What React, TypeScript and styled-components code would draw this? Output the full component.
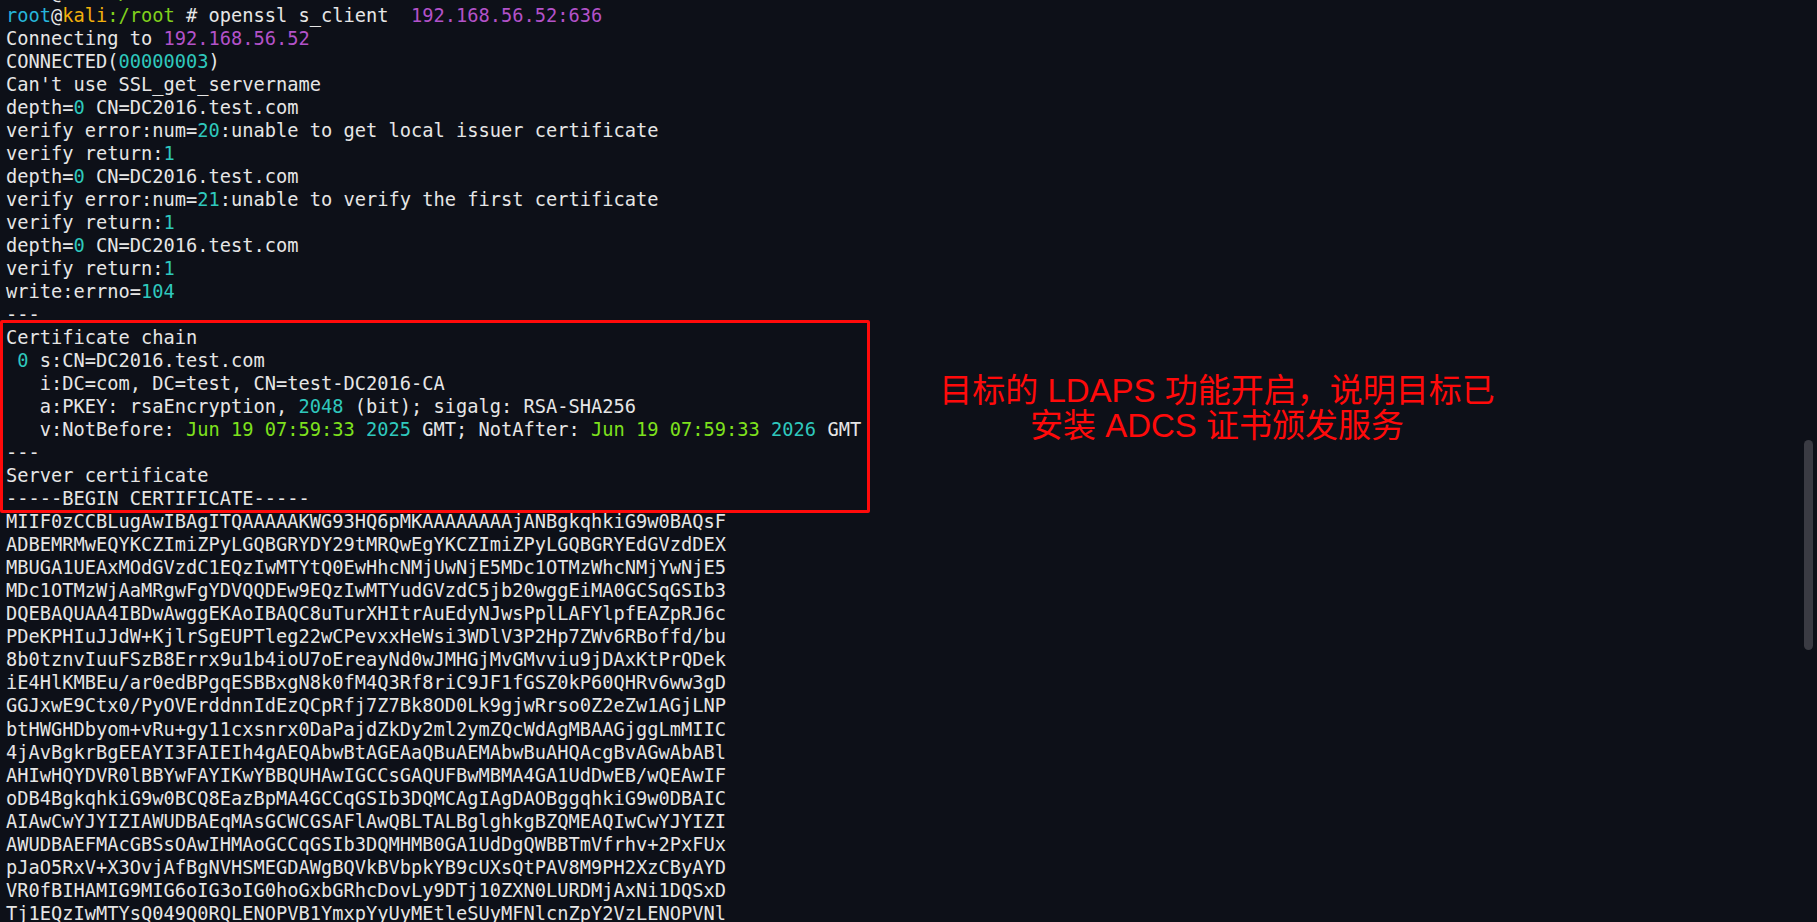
import React from 'react';
import styled, { createGlobalStyle } from 'styled-components';

const Colors = {
  bg: '#0d1018',
  text: '#e6e6e6',
  num: '#2fc8bd',
  addr: '#b352c9',
  date: '#7ee11d',
  user: '#26b5da',
  host: '#f3b10c',
  path: '#80d11d',
  mark: '#ff0a0a',
  thumb: '#3a3b43',
};

type Tone = 'text' | 'num' | 'addr' | 'date' | 'user' | 'host' | 'path';
type Segment = [string, Tone?];

const GlobalStyle = createGlobalStyle`
  html, body {
    margin: 0;
    padding: 0;
    background: ${Colors.bg};
    overflow: hidden;
  }
`;

const Screen = styled.div`
  width: 1817px;
  height: 922px;
  display: flex;
  flex-direction: row;
  background: ${Colors.bg};
  overflow: hidden;
`;

const Terminal = styled.div`
  flex: 1;
  margin-top: -19px;
  font-family: 'DejaVu Sans Mono', 'Liberation Mono', monospace;
  font-size: 18.69px;
  line-height: 23.03px;
  color: ${Colors.text};
`;

const Line = styled.div<{ $inset?: number }>`
  padding-left: ${(p) => p.$inset ?? 6}px;
  white-space: pre;
  height: 23.03px;
`;

const Span = styled.span<{ $tone: Tone }>`
  color: ${(p) => Colors[p.$tone]};
`;

const ChainRow = styled.div`
  display: flex;
  flex-direction: row;
  align-items: flex-start;
  margin: -6.4px 0 -3px 0;
`;

const ChainBox = styled.div`
  width: 864px;
  flex-shrink: 0;
  border: 3px solid ${Colors.mark};
  border-radius: 2px;
  padding-top: 3.4px;
`;

const Note = styled.p`
  margin: 0 0 0 47px;
  padding-top: 53px;
  width: 600px;
  font-family: 'Liberation Sans', 'Noto Sans CJK SC', sans-serif;
  font-size: 33px;
  line-height: 35px;
  color: ${Colors.mark};
  text-align: center;
  white-space: nowrap;
`;

const ScrollTrack = styled.div`
  width: 17px;
  flex-shrink: 0;
  padding-top: 440px;
  display: flex;
  justify-content: center;
`;

const Thumb = styled.div`
  width: 9px;
  height: 210px;
  border-radius: 5px;
  background: ${Colors.thumb};
`;

const prompt: Segment[] = [
  ['root', 'user'],
  ['@'],
  ['kali', 'host'],
  [':/root', 'path'],
  [' # '],
];

const before: Segment[][] = [
  prompt,
  [...prompt, ['openssl s_client  '], ['192.168.56.52:636', 'addr']],
  [['Connecting to '], ['192.168.56.52', 'addr']],
  [['CONNECTED('], ['00000003', 'num'], [')']],
  [["Can't use SSL_get_servername"]],
  [['depth='], ['0', 'num'], [' CN=DC2016.test.com']],
  [['verify error:num='], ['20', 'num'], [':unable to get local issuer certificate']],
  [['verify return:'], ['1', 'num']],
  [['depth='], ['0', 'num'], [' CN=DC2016.test.com']],
  [['verify error:num='], ['21', 'num'], [':unable to verify the first certificate']],
  [['verify return:'], ['1', 'num']],
  [['depth='], ['0', 'num'], [' CN=DC2016.test.com']],
  [['verify return:'], ['1', 'num']],
  [['write:errno='], ['104', 'num']],
  [['---']],
];

const chain: Segment[][] = [
  [['Certificate chain']],
  [[' '], ['0', 'num'], [' s:CN=DC2016.test.com']],
  [['   i:DC=com, DC=test, CN=test-DC2016-CA']],
  [['   a:PKEY: rsaEncryption, '], ['2048', 'num'], [' (bit); sigalg: RSA-SHA256']],
  [
    ['   v:NotBefore: '],
    ['Jun 19 07:59:33', 'date'],
    [' '],
    ['2025', 'num'],
    [' GMT; NotAfter: '],
    ['Jun 19 07:59:33', 'date'],
    [' '],
    ['2026', 'num'],
    [' GMT'],
  ],
  [['---']],
  [['Server certificate']],
  [['-----BEGIN CERTIFICATE-----']],
];

const certBody = [
  'MIIF0zCCBLugAwIBAgITQAAAAAKWG93HQ6pMKAAAAAAAAjANBgkqhkiG9w0BAQsF',
  'ADBEMRMwEQYKCZImiZPyLGQBGRYDY29tMRQwEgYKCZImiZPyLGQBGRYEdGVzdDEX',
  'MBUGA1UEAxMOdGVzdC1EQzIwMTYtQ0EwHhcNMjUwNjE5MDc1OTMzWhcNMjYwNjE5',
  'MDc1OTMzWjAaMRgwFgYDVQQDEw9EQzIwMTYudGVzdC5jb20wggEiMA0GCSqGSIb3',
  'DQEBAQUAA4IBDwAwggEKAoIBAQC8uTurXHItrAuEdyNJwsPplLAFYlpfEAZpRJ6c',
  'PDeKPHIuJJdW+KjlrSgEUPTleg22wCPevxxHeWsi3WDlV3P2Hp7ZWv6RBoffd/bu',
  '8b0tznvIuuFSzB8Errx9u1b4ioU7oEreayNd0wJMHGjMvGMvviu9jDAxKtPrQDek',
  'iE4HlKMBEu/ar0edBPgqESBBxgN8k0fM4Q3Rf8riC9JF1fGSZ0kP60QHRv6ww3gD',
  'GGJxwE9Ctx0/PyOVErddnnIdEzQCpRfj7Z7Bk8OD0Lk9gjwRrso0Z2eZw1AGjLNP',
  'btHWGHDbyom+vRu+gy11cxsnrx0DaPajdZkDy2ml2ymZQcWdAgMBAAGjggLmMIIC',
  '4jAvBgkrBgEEAYI3FAIEIh4gAEQAbwBtAGEAaQBuAEMAbwBuAHQAcgBvAGwAbABl',
  'AHIwHQYDVR0lBBYwFAYIKwYBBQUHAwIGCCsGAQUFBwMBMA4GA1UdDwEB/wQEAwIF',
  'oDB4BgkqhkiG9w0BCQ8EazBpMA4GCCqGSIb3DQMCAgIAgDAOBggqhkiG9w0DBAIC',
  'AIAwCwYJYIZIAWUDBAEqMAsGCWCGSAFlAwQBLTALBglghkgBZQMEAQIwCwYJYIZI',
  'AWUDBAEFMAcGBSsOAwIHMAoGCCqGSIb3DQMHMB0GA1UdDgQWBBTmVfrhv+2PxFUx',
  'pJaO5RxV+X3OvjAfBgNVHSMEGDAWgBQVkBVbpkYB9cUXsQtPAV8M9PH2XzCByAYD',
  'VR0fBIHAMIG9MIG6oIG3oIG0hoGxbGRhcDovLy9DTj10ZXN0LURDMjAxNi1DQSxD',
  'Tj1EQzIwMTYsQ049Q0RQLENOPVB1YmxpYyUyMEtleSUyMFNlcnZpY2VzLENOPVNl',
];

const TermLine: React.FC<{ segments: Segment[]; inset?: number }> = ({ segments, inset }) => (
  <Line $inset={inset}>
    {segments.map(([text, tone], i) => (
      <Span key={i} $tone={tone ?? 'text'}>
        {text}
      </Span>
    ))}
  </Line>
);

export default function App() {
  return (
    <>
      <GlobalStyle />
      <Screen>
        <Terminal>
          {before.map((segs, i) => (
            <TermLine key={`b${i}`} segments={segs} />
          ))}
          <ChainRow>
            <ChainBox>
              {chain.map((segs, i) => (
                <TermLine key={`c${i}`} segments={segs} inset={3} />
              ))}
            </ChainBox>
            <Note>
              目标的 LDAPS 功能开启，说明目标已
              <br />
              安装 ADCS 证书颁发服务
            </Note>
          </ChainRow>
          {certBody.map((text, i) => (
            <TermLine key={`m${i}`} segments={[[text]]} />
          ))}
        </Terminal>
        <ScrollTrack>
          <Thumb />
        </ScrollTrack>
      </Screen>
    </>
  );
}
